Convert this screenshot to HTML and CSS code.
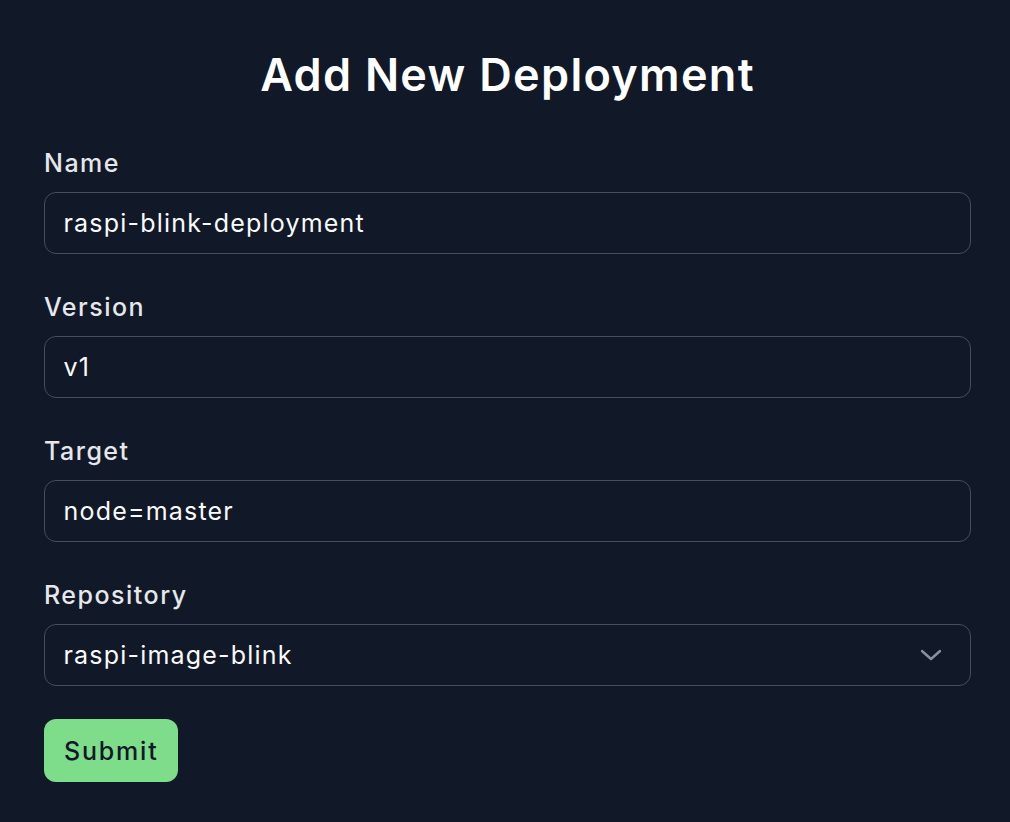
FILE: index.html
```html
<!DOCTYPE html>
<html lang="en">
<head>
<meta charset="utf-8">
<title>Add New Deployment</title>
<link rel="stylesheet" href="styles.css">
</head>
<body>
<main class="page">
  <h1 class="title">Add New Deployment</h1>
  <form class="form">
    <div class="field">
      <label class="label" for="name">Name</label>
      <input class="input" id="name" type="text" value="raspi-blink-deployment">
    </div>
    <div class="field">
      <label class="label" for="version">Version</label>
      <input class="input" id="version" type="text" value="v1">
    </div>
    <div class="field">
      <label class="label" for="target">Target</label>
      <input class="input" id="target" type="text" value="node=master">
    </div>
    <div class="field">
      <label class="label" for="repo">Repository</label>
      <div class="select">
        <span class="select-value">raspi-image-blink</span>
        <svg class="chevron" width="22" height="12" viewBox="0 0 22 12" aria-hidden="true">
          <path d="M2 2 L11 10 L20 2" fill="none" stroke="#8b919c" stroke-width="2.4" stroke-linecap="round" stroke-linejoin="round"/>
        </svg>
      </div>
    </div>
    <div class="actions">
      <button class="btn" type="button">Submit</button>
    </div>
  </form>
</main>
</body>
</html>
```
FILE: styles.css
```css
html, body {
  margin: 0;
  padding: 0;
  background: #111827;
}
body {
  font-family: Inter, "Noto Sans", "Liberation Sans", sans-serif;
  color: #f9fafb;
}
.page {
  width: 927px;
  margin-left: 44px;
  padding-top: 48px;
}
.title {
  margin: 0;
  font-size: 45px;
  line-height: 54px;
  font-weight: 600;
  letter-spacing: 1.3px;
  text-align: center;
  color: #ffffff;
}
.form {
  display: flex;
  flex-direction: column;
  gap: 35px;
  margin-top: 43px;
}
.field {
  display: flex;
  flex-direction: column;
  gap: 11px;
}
.label {
  font-size: 25px;
  line-height: 36px;
  font-weight: 500;
  letter-spacing: 1.5px;
  color: #e5e7eb;
}
.input, .select {
  box-sizing: border-box;
  height: 62px;
  width: 100%;
  margin: 0;
  padding: 0 18.5px;
  border: 1.5px solid #464d5b;
  border-radius: 12px;
  background: #111827;
  color: #f9fafb;
  font-family: inherit;
  font-size: 25px;
  letter-spacing: 1.2px;
  outline: none;
}
.select {
  display: flex;
  align-items: center;
  justify-content: space-between;
  padding-right: 28px;
}
.chevron {
  display: block;
}
.actions {
  margin-top: -2px;
}
.btn {
  height: 63px;
  padding: 0 20px;
  border: none;
  border-radius: 12px;
  background: #7edd8b;
  color: #111827;
  font-family: inherit;
  font-size: 25px;
  font-weight: 500;
  letter-spacing: 1.8px;
  cursor: pointer;
}
```
